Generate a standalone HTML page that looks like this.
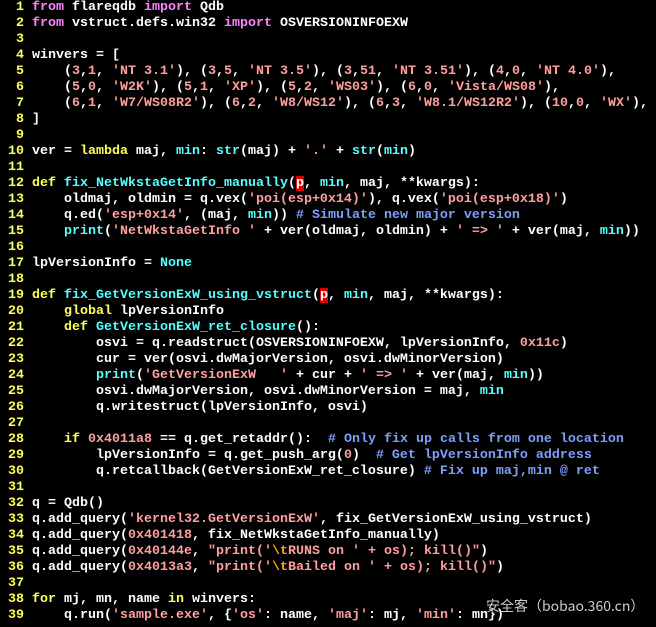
<!DOCTYPE html>
<html><head><meta charset="utf-8"><style>
html,body{margin:0;padding:0;background:#000;width:656px;height:627px;overflow:hidden;position:relative}
pre{margin:0;font-family:"Liberation Mono",monospace;font-weight:bold;font-size:13.33px;line-height:16px;color:#fff;white-space:pre}
.n{color:#ffff55}.k{color:#ffff55}.m{color:#ff80ff}.s{color:#ff9f9f}.c{color:#55ffff}.b{color:#7f9fff}.o{color:#ffa500}
.h{background:#e00000;color:#fff}
.wm{position:absolute;left:486px;top:596px;font-family:"Noto Sans CJK SC",sans-serif;font-size:14px;color:#ccc;text-shadow:1px 1px 1px #000}
</style></head><body><pre><span class="n">  1 </span><span class="m">from</span> flareqdb <span class="m">import</span> Qdb
<span class="n">  2 </span><span class="m">from</span> vstruct.defs.win32 <span class="m">import</span> OSVERSIONINFOEXW
<span class="n">  3 </span>
<span class="n">  4 </span>winvers = [
<span class="n">  5 </span>    (<span class="s">3</span>,<span class="s">1</span>, <span class="s">'NT 3.1'</span>), (<span class="s">3</span>,<span class="s">5</span>, <span class="s">'NT 3.5'</span>), (<span class="s">3</span>,<span class="s">51</span>, <span class="s">'NT 3.51'</span>), (<span class="s">4</span>,<span class="s">0</span>, <span class="s">'NT 4.0'</span>),
<span class="n">  6 </span>    (<span class="s">5</span>,<span class="s">0</span>, <span class="s">'W2K'</span>), (<span class="s">5</span>,<span class="s">1</span>, <span class="s">'XP'</span>), (<span class="s">5</span>,<span class="s">2</span>, <span class="s">'WS03'</span>), (<span class="s">6</span>,<span class="s">0</span>, <span class="s">'Vista/WS08'</span>),
<span class="n">  7 </span>    (<span class="s">6</span>,<span class="s">1</span>, <span class="s">'W7/WS08R2'</span>), (<span class="s">6</span>,<span class="s">2</span>, <span class="s">'W8/WS12'</span>), (<span class="s">6</span>,<span class="s">3</span>, <span class="s">'W8.1/WS12R2'</span>), (<span class="s">10</span>,<span class="s">0</span>, <span class="s">'WX'</span>),
<span class="n">  8 </span>]
<span class="n">  9 </span>
<span class="n"> 10 </span>ver = <span class="k">lambda</span> maj, <span class="c">min</span>: <span class="c">str</span>(maj) + <span class="s">'.'</span> + <span class="c">str</span>(<span class="c">min</span>)
<span class="n"> 11 </span>
<span class="n"> 12 </span><span class="k">def</span> <span class="c">fix_NetWkstaGetInfo_manually</span>(<span class="h">p</span>, <span class="c">min</span>, maj, **kwargs):
<span class="n"> 13 </span>    oldmaj, oldmin = q.vex(<span class="s">'poi(esp+0x14)'</span>), q.vex(<span class="s">'poi(esp+0x18)'</span>)
<span class="n"> 14 </span>    q.ed(<span class="s">'esp+0x14'</span>, (maj, <span class="c">min</span>)) <span class="b"># Simulate new major version</span>
<span class="n"> 15 </span>    <span class="c">print</span>(<span class="s">'NetWkstaGetInfo '</span> + ver(oldmaj, oldmin) + <span class="s">' =&gt; '</span> + ver(maj, <span class="c">min</span>))
<span class="n"> 16 </span>
<span class="n"> 17 </span>lpVersionInfo = <span class="c">None</span>
<span class="n"> 18 </span>
<span class="n"> 19 </span><span class="k">def</span> <span class="c">fix_GetVersionExW_using_vstruct</span>(<span class="h">p</span>, <span class="c">min</span>, maj, **kwargs):
<span class="n"> 20 </span>    <span class="k">global</span> lpVersionInfo
<span class="n"> 21 </span>    <span class="k">def</span> <span class="c">GetVersionExW_ret_closure</span>():
<span class="n"> 22 </span>        osvi = q.readstruct(OSVERSIONINFOEXW, lpVersionInfo, <span class="s">0x11c</span>)
<span class="n"> 23 </span>        cur = ver(osvi.dwMajorVersion, osvi.dwMinorVersion)
<span class="n"> 24 </span>        <span class="c">print</span>(<span class="s">'GetVersionExW   '</span> + cur + <span class="s">' =&gt; '</span> + ver(maj, <span class="c">min</span>))
<span class="n"> 25 </span>        osvi.dwMajorVersion, osvi.dwMinorVersion = maj, <span class="c">min</span>
<span class="n"> 26 </span>        q.writestruct(lpVersionInfo, osvi)
<span class="n"> 27 </span>
<span class="n"> 28 </span>    <span class="k">if</span> <span class="s">0x4011a8</span> == q.get_retaddr():  <span class="b"># Only fix up calls from one location</span>
<span class="n"> 29 </span>        lpVersionInfo = q.get_push_arg(<span class="s">0</span>)  <span class="b"># Get lpVersionInfo address</span>
<span class="n"> 30 </span>        q.retcallback(GetVersionExW_ret_closure) <span class="b"># Fix up maj,min @ ret</span>
<span class="n"> 31 </span>
<span class="n"> 32 </span>q = Qdb()
<span class="n"> 33 </span>q.add_query(<span class="s">'kernel32.GetVersionExW'</span>, fix_GetVersionExW_using_vstruct)
<span class="n"> 34 </span>q.add_query(<span class="s">0x401418</span>, fix_NetWkstaGetInfo_manually)
<span class="n"> 35 </span>q.add_query(<span class="s">0x40144e</span>, <span class="s">"print('</span><span class="o">\t</span><span class="s">RUNS on ' + os); kill()"</span>)
<span class="n"> 36 </span>q.add_query(<span class="s">0x4013a3</span>, <span class="s">"print('</span><span class="o">\t</span><span class="s">Bailed on ' + os); kill()"</span>)
<span class="n"> 37 </span>
<span class="n"> 38 </span><span class="k">for</span> mj, mn, name <span class="k">in</span> winvers:
<span class="n"> 39 </span>    q.run(<span class="s">'sample.exe'</span>, {<span class="s">'os'</span>: name, <span class="s">'maj'</span>: mj, <span class="s">'min'</span>: mn})
</pre><div class="wm">安全客（bobao.360.cn）</div></body></html>
